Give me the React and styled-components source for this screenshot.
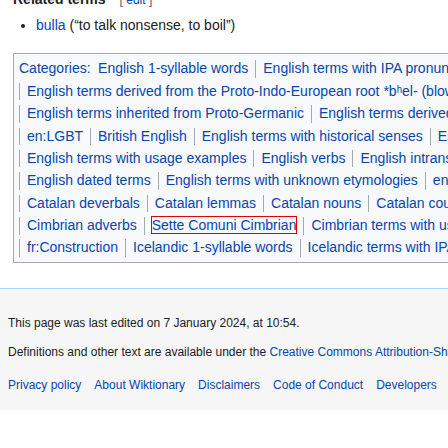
import React from 'react';
import styled, { createGlobalStyle } from 'styled-components';

const GlobalStyle = createGlobalStyle`
  html, body {
    margin: 0;
    padding: 0;
    background: #ffffff;
  }
  body {
    font-family: "Liberation Sans", Arial, sans-serif;
    color: #202122;
  }
`;

const rows = [
  ['English 1-syllable words', 'English terms with IPA pronunciation', 'English rhymes'],
  ['English terms derived from the Proto-Indo-European root *bʰel- (blow)'],
  ['English terms inherited from Proto-Germanic', 'English terms derived from Proto-Germanic'],
  ['en:LGBT', 'British English', 'English terms with historical senses', 'English terms with obsolete senses'],
  ['English terms with usage examples', 'English verbs', 'English intransitive verbs'],
  ['English dated terms', 'English terms with unknown etymologies', 'en:Sound'],
  ['Catalan deverbals', 'Catalan lemmas', 'Catalan nouns', 'Catalan countable nouns'],
  ['Cimbrian adverbs', 'Sette Comuni Cimbrian', 'Cimbrian terms with usage examples'],
  ['fr:Construction', 'Icelandic 1-syllable words', 'Icelandic terms with IPA pronunciation'],
];

const footerLinks = [
  'Privacy policy',
  'About Wiktionary',
  'Disclaimers',
  'Code of Conduct',
  'Developers',
  'Statistics',
];

const App = () => {
  return (
    <Page>
      <GlobalStyle />
      <Content>
        <Heading>
          Related terms
          <EditSection>
            [ <Link href='#'>edit</Link> ]
          </EditSection>
        </Heading>
        <BulletList>
          <li>
            <Link href='#'>bulla</Link> (“to talk nonsense, to boil”)
          </li>
        </BulletList>
        <CatLinks>
          {rows.map((row, rowIndex) => (
            <CatRow key={rowIndex}>
              {rowIndex === 0 && (
                <CatLabel>
                  <Link href='#'>Categories</Link>:
                </CatLabel>
              )}
              {row.map((name, index) => (
                <CatItem key={name} first={rowIndex === 0 && index === 0}>
                  <CatLink href='#' marked={name === 'Sette Comuni Cimbrian'}>
                    {name}
                  </CatLink>
                </CatItem>
              ))}
            </CatRow>
          ))}
        </CatLinks>
      </Content>
      <Footer>
        <FooterLine>This page was last edited on 7 January 2024, at 10:54.</FooterLine>
        <FooterLine gap={12}>
          Definitions and other text are available under the{' '}
          <Link href='#'>Creative Commons Attribution-ShareAlike License</Link>;
          additional terms may apply. By using this site, you agree to the Terms of Use and Privacy Policy.
        </FooterLine>
        <FooterPlaces>
          {footerLinks.map((name) => (
            <li key={name}>
              <Link href='#'>{name}</Link>
            </li>
          ))}
        </FooterPlaces>
      </Footer>
    </Page>
  );
};

export default App;

const Page = styled.div`
  width: 448px;
  overflow: hidden;
`;

const Content = styled.div`
  padding: 0 0 25px 13px;
  font-size: 14px;
  line-height: 22px;
  background: #ffffff;
`;

const Link = styled.a`
  color: #0645ad;
  text-decoration: none;
`;

const Heading = styled.h4`
  margin: -12px 0 0;
  font-size: 14px;
  font-weight: bold;
  line-height: 22px;
  white-space: nowrap;
`;

const EditSection = styled.span`
  margin-left: 14px;
  font-size: 12px;
  font-weight: normal;
  color: #54595d;
`;

const BulletList = styled.ul`
  margin: 3px 0 0;
  padding: 0 0 0 23px;
  list-style: disc;
  white-space: nowrap;

  li {
    line-height: 22px;
  }
`;

const CatLinks = styled.div`
  margin-top: 17px;
  width: 1100px;
  border: 1px solid #a2a9b1;
  background: #f8f9fa;
  padding: 4px 5px 3px;
`;

const CatRow = styled.div`
  display: flex;
  align-items: center;
  height: 22.375px;
  white-space: nowrap;
`;

const CatLabel = styled.span`
  margin-right: 4px;
  color: #0645ad;
  line-height: 17.5px;
`;

const CatItem = styled.span`
  line-height: 17.5px;
  border-left: ${(p) => (p.first ? 'none' : '1px solid #a2a9b1')};
  padding: ${(p) => (p.first ? '0 7px 0 3.5px' : '0 7px')};
`;

const CatLink = styled(Link)`
  outline: ${(p) => (p.marked ? '1px solid #e00000' : 'none')};
  outline-offset: 0;
`;

const Footer = styled.footer`
  border-top: 1px solid #a7d7f9;
  background: #f6f6f6;
  padding: 26px 0 16px 8px;
  font-size: 12px;
  line-height: 17px;
`;

const FooterLine = styled.div`
  margin-top: ${(p) => (p.gap ? `${p.gap}px` : '0')};
  white-space: nowrap;
  color: #202122;
`;

const FooterPlaces = styled.ul`
  display: flex;
  gap: 13px;
  margin: 16px 0 0;
  padding: 0;
  list-style: none;
  white-space: nowrap;
`;
